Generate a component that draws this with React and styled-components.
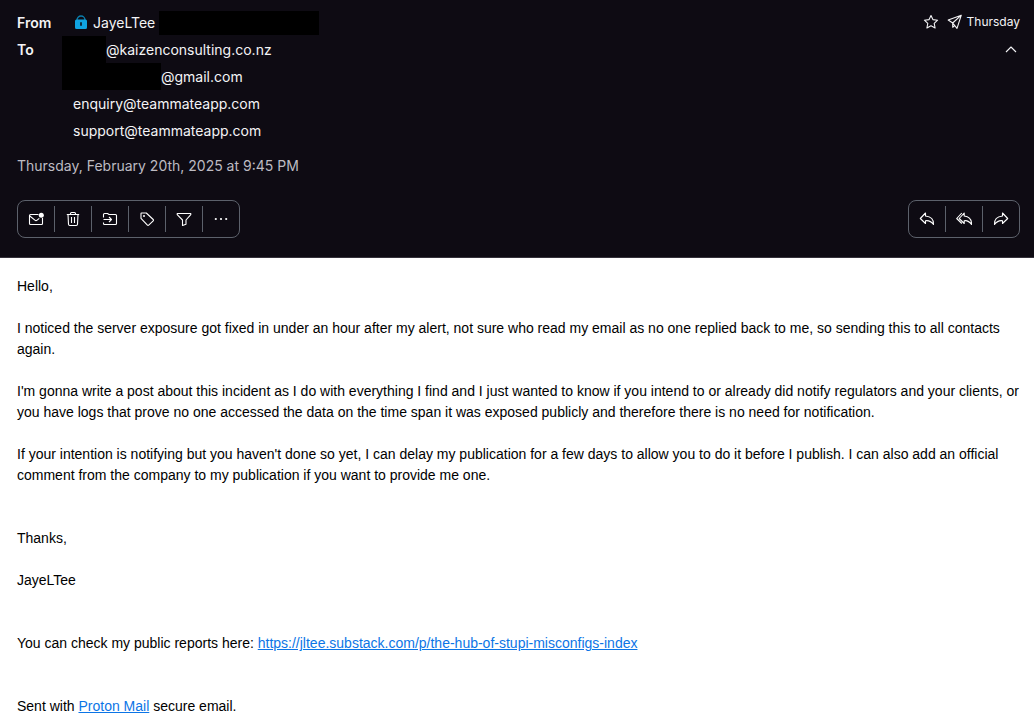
import React, { useState } from 'react';
import styled, { createGlobalStyle } from 'styled-components';

const GlobalStyle = createGlobalStyle`
  * {
    box-sizing: border-box;
  }

  body {
    margin: 0;
    background-color: #fff;
  }
`;

const Message = styled.article`
  display: flex;
  flex-direction: column;
  min-height: 100vh;
`;

const Header = styled.header`
  background-color: #0e0b13;
  border-bottom: 1px solid #35323b;
  padding: 9px 14px 19px 17px;
  color: #f4f4f6;
  font-family: Inter, sans-serif;
  font-size: 14px;
  line-height: 27px;
`;

const HeaderTop = styled.div`
  display: flex;
  justify-content: space-between;
`;

const Fields = styled.dl`
  display: grid;
  grid-template-columns: 45px auto;
  margin: 0;
`;

const FieldName = styled.dt`
  font-weight: 600;
`;

const FieldValue = styled.dd`
  margin: 0;
`;

const Address = styled.div`
  display: flex;
  align-items: center;
  height: 27px;
  padding-left: ${props => props.$hidden ? '0' : '11px'};
`;

const SenderName = styled.span`
  margin: 0 4px;
`;

const Redacted = styled.span`
  width: ${props => props.$width}px;
  height: ${props => props.$height || 27}px;
  background-color: #000;
`;

const Side = styled.div`
  display: flex;
  flex-direction: column;
  align-items: flex-end;
`;

const Status = styled.div`
  display: flex;
  align-items: center;
  gap: 8px;
  height: 25px;
  font-size: 12px;
`;

const Sent = styled.span`
  display: flex;
  align-items: center;
  gap: 4px;
`;

const PlainButton = styled.button`
  display: flex;
  padding: 0;
  border: none;
  background: none;
  color: inherit;
  cursor: pointer;
`;

const ToggleButton = styled(PlainButton)`
  padding: 8px 1px;
`;

const SentDate = styled.time`
  display: block;
  margin-top: 8px;
  color: #bdbbc2;
`;

const Actions = styled.div`
  display: flex;
  justify-content: space-between;
  margin-top: 21px;
`;

const Toolbar = styled.div`
  display: flex;
  height: 38px;
  padding: 5px 0;
  border: 1px solid #5c616b;
  border-radius: 8px;
`;

const ToolButton = styled.button`
  display: flex;
  align-items: center;
  justify-content: center;
  width: 37px;
  padding: 0;
  border: none;
  border-left: 1px solid #5c616b;
  background: none;
  color: #fff;
  cursor: pointer;

  &:first-child {
    width: 36px;
    border-left: none;
  }
`;

const Body = styled.div`
  padding: 18px 14px 7px 17px;
  color: #000;
  font-family: 'Liberation Sans', Arial, sans-serif;
  font-size: 14px;
  line-height: 21px;
`;

const Paragraph = styled.p`
  margin: 0 0 ${props => props.$wide ? '42px' : '21px'};

  &:last-child {
    margin-bottom: 0;
  }
`;

const Link = styled.a`
  color: #0c75e6;
  text-decoration: underline;
`;

const icons = {
  lock: (
    <>
      <path d="M4 6.200V5a4 4 0 0 1 8 0v1.200" stroke="#0a7fae" strokeWidth="1.3" />
      <path d="M3.500 4.500h9a1.500 1.500 0 0 1 1.500 1.500v6.500a1.500 1.500 0 0 1-1.500 1.500h-9A1.500 1.500 0 0 1 2 12.500V6a1.500 1.500 0 0 1 1.500-1.500z" fill="#10a3e0" stroke="none" />
      <path d="M8 7.200v3.600" stroke="#0c2c40" strokeWidth="2" />
    </>
  ),
  star: <path d="M8 1.500l1.900 4.100 4.700.6-3.400 3.200.9 4.600L8 11.800l-4.100 2.200.9-4.600L1.400 6.200l4.700-.6z" />,
  plane: <path d="M14.300 1.200L1.200 6l4.500 3 4.300 5.300zM14.300 1.200L5.700 9v4.300l2-1.800" />,
  chevron: <path d="M3 10l5-5 5 5" />,
  unread: (
    <>
      <path d="M10.500 3.500H2.500a1 1 0 0 0-1 1v8a1 1 0 0 0 1 1h11a1 1 0 0 0 1-1V7" />
      <path d="M1.800 5l5.100 4.200a1.700 1.700 0 0 0 2.200 0l2.200-1.800" />
      <circle cx="13.300" cy="4.200" r="2.500" fill="currentColor" stroke="none" />
    </>
  ),
  trash: (
    <>
      <path d="M1.800 3.500h12.400M5.500 3.500v-1a1 1 0 0 1 1-1h3a1 1 0 0 1 1 1v1" />
      <path d="M3 3.500l.5 9.800a1.300 1.300 0 0 0 1.300 1.200h6.400a1.300 1.300 0 0 0 1.300-1.200l.5-9.800M6.500 6v6M9.500 6v6" />
    </>
  ),
  move: (
    <>
      <path d="M1.500 6.500v-3a1 1 0 0 1 1-1h3L7 3.500h6.500a1 1 0 0 1 1 1v8a1 1 0 0 1-1 1h-11a1 1 0 0 1-1-1v-1" />
      <path d="M1.500 8.500h8M7 6l2.500 2.500L7 11" />
    </>
  ),
  tag: (
    <>
      <path d="M2.500 2h4.800l6.900 6.500a.9.9 0 0 1 0 1.300l-4.500 4.400a.9.9 0 0 1-1.300 0L2 7.300V2.500a.5.5 0 0 1 .5-.5z" />
      <circle cx="5" cy="5" r="1" fill="currentColor" stroke="none" />
    </>
  ),
  filter: <path d="M1.200 2.500h13.600v1.100L10 9v4.200l-3.500 1.300V9L1.200 3.600z" />,
  more: (
    <g fill="currentColor" stroke="none">
      <circle cx="2.800" cy="8" r="1.100" />
      <circle cx="8" cy="8" r="1.100" />
      <circle cx="13.200" cy="8" r="1.100" />
    </g>
  ),
  reply: <path d="M6.500 2L1.300 7.500l5.200 5V9.800c3.200-.6 5.500.5 8 3.700C14.800 8.800 12 5.500 6.500 5z" />,
  replyAll: (
    <>
      <path d="M8.200 2L3.200 7.500l5 5V9.800c3-.6 5 .5 7.300 3.700.2-4.700-2.300-8-7.300-8.500z" />
      <path d="M5.800 2L.7 7.500l5.100 5" />
    </>
  ),
  forward: <path d="M9.500 2l5.200 5.500-5.200 5V9.800c-3.200-.6-5.500.5-8 3.700C1.200 8.800 4 5.500 9.500 5z" />
};

function Icon({ name, size = 16 }) {
  return (
    <svg
      width={size}
      height={size}
      viewBox="0 0 16 16"
      fill="none"
      stroke="currentColor"
      strokeWidth="1.1"
      strokeLinejoin="round"
      aria-hidden="true"
    >
      {icons[name]}
    </svg>
  );
}

const messageTools = [
  { icon: 'unread', label: 'Mark as unread' },
  { icon: 'trash', label: 'Move to trash' },
  { icon: 'move', label: 'Move to' },
  { icon: 'tag', label: 'Label as' },
  { icon: 'filter', label: 'Filter on' },
  { icon: 'more', label: 'More' }
];

const replyTools = [
  { icon: 'reply', label: 'Reply' },
  { icon: 'replyAll', label: 'Reply all' },
  { icon: 'forward', label: 'Forward' }
];

// hidden: width of the covered part in front of the domain
const recipients = [
  { text: '@kaizenconsulting.co.nz', hidden: 44 },
  { text: '@gmail.com', hidden: 99 },
  { text: 'enquiry@teammateapp.com' },
  { text: 'support@teammateapp.com' }
];

function Tools({ tools }) {
  return (
    <Toolbar role="toolbar">
      {tools.map(tool => (
        <ToolButton key={tool.icon} type="button" aria-label={tool.label}>
          <Icon name={tool.icon} />
        </ToolButton>
      ))}
    </Toolbar>
  );
}

function App() {
  const [expanded, setExpanded] = useState(true);
  const shown = expanded ? recipients : recipients.slice(0, 1);

  return (
    <Message>
      <GlobalStyle />
      <Header>
        <HeaderTop>
          <Fields>
            <FieldName>From</FieldName>
            <FieldValue>
              <Address>
                <Icon name="lock" />
                <SenderName>JayeLTee</SenderName>
                <Redacted $width={160} $height={24} />
              </Address>
            </FieldValue>
            <FieldName>To</FieldName>
            <FieldValue>
              {shown.map(recipient => (
                <Address key={recipient.text} $hidden={recipient.hidden}>
                  {recipient.hidden && <Redacted $width={recipient.hidden} />}
                  {recipient.text}
                </Address>
              ))}
            </FieldValue>
          </Fields>
          <Side>
            <Status>
              <PlainButton type="button" aria-label="Star message">
                <Icon name="star" />
              </PlainButton>
              <Sent>
                <Icon name="plane" />
                Thursday
              </Sent>
            </Status>
            <ToggleButton
              type="button"
              aria-label="Toggle details"
              aria-expanded={expanded}
              onClick={() => setExpanded(!expanded)}
            >
              <Icon name="chevron" />
            </ToggleButton>
          </Side>
        </HeaderTop>
        <SentDate dateTime="2025-02-20T21:45">Thursday, February 20th, 2025 at 9:45 PM</SentDate>
        <Actions>
          <Tools tools={messageTools} />
          <Tools tools={replyTools} />
        </Actions>
      </Header>
      <Body>
        <Paragraph>Hello,</Paragraph>
        <Paragraph>
          I noticed the server exposure got fixed in under an hour after my alert, not sure who read my email as no one
          replied back to me, so sending this to all contacts again.
        </Paragraph>
        <Paragraph>
          I'm gonna write a post about this incident as I do with everything I find and I just wanted to know if you
          intend to or already did notify regulators and your clients, or you have logs that prove no one accessed the
          data on the time span it was exposed publicly and therefore there is no need for notification.
        </Paragraph>
        <Paragraph $wide>
          If your intention is notifying but you haven't done so yet, I can delay my publication for a few days to allow
          you to do it before I publish. I can also add an official comment from the company to my publication if you
          want to provide me one.
        </Paragraph>
        <Paragraph>Thanks,</Paragraph>
        <Paragraph $wide>JayeLTee</Paragraph>
        <Paragraph $wide>
          You can check my public reports here:{' '}
          <Link href="https://jltee.substack.com/p/the-hub-of-stupi-misconfigs-index">
            https://jltee.substack.com/p/the-hub-of-stupi-misconfigs-index
          </Link>
        </Paragraph>
        <Paragraph>
          Sent with <Link href="https://proton.me/mail">Proton Mail</Link> secure email.
        </Paragraph>
      </Body>
    </Message>
  );
}

export default App;
